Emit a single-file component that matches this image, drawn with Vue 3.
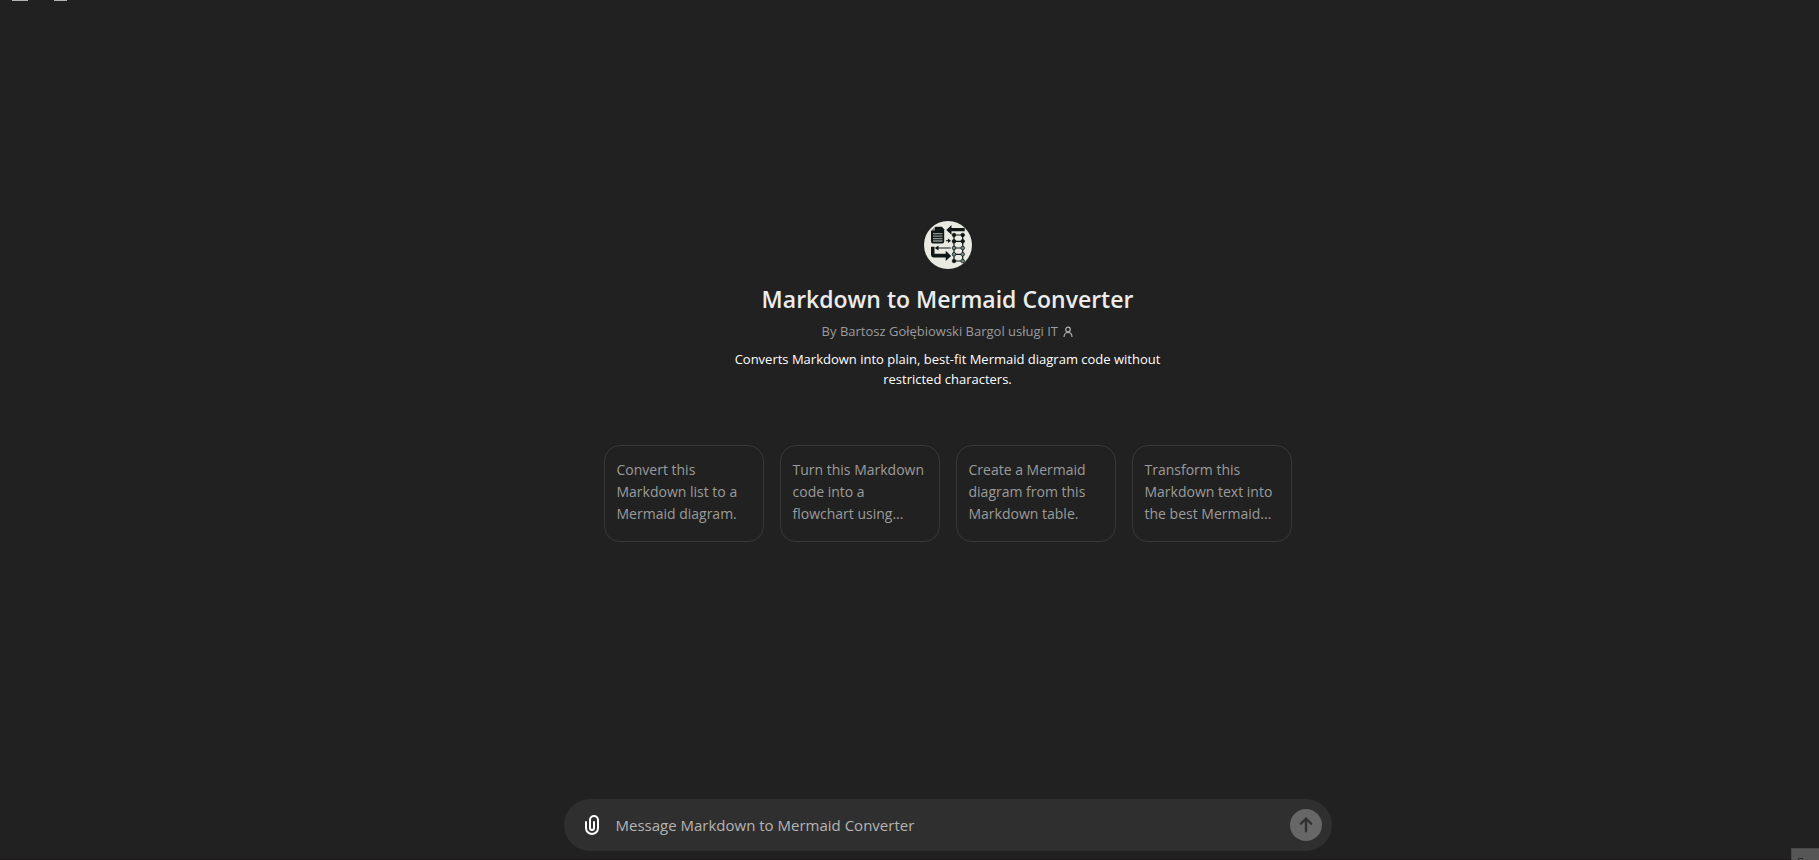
<script setup>
import { ref } from 'vue'

const message = ref('')
const prompts = [
  'Convert this Markdown list to a Mermaid diagram.',
  'Turn this Markdown code into a flowchart using...',
  'Create a Mermaid diagram from this Markdown table.',
  'Transform this Markdown text into the best Mermaid...',
]
const rows = [14, 20.3, 27, 33.3, 40]
</script>

<template>
  <div class="page">
    <div class="top-icons" aria-hidden="true"><span class="mark wide"></span><span class="mark"></span></div>

    <main class="content">
      <section class="intro">
        <svg class="logo" viewBox="0 0 48 48" aria-hidden="true">
          <circle cx="24" cy="24" r="24" fill="#e9ebe3" />
          <path d="M11.500 5.700H18l2.200 2.500v12.300a2 2 0 0 1-2 2H9a2 2 0 0 1-2-2V10z" fill="#101817" />
          <path d="M7.500 9.500L11 6v3.500z" fill="#8b918c" />
          <path d="M9 12.700h9.500M9 15.200h9.500M9 17.700h9.500M9 20h9.500" stroke="#8f958f" stroke-width="1.300" />
          <path d="M22.300 9L27.500 4v3h13.200v3.300H27.500v3.500z" fill="#101817" />
          <path d="M22 19.700h3M13 27h13.700" stroke="#101817" stroke-width="1" />
          <path d="M24 17.500l3 2.200-3 2.200zM14.500 24.500v5L10.700 27z" fill="#101817" />
          <path d="M7 25.700h3.500v7H21.700v-3L27.200 35l-5.500 5v-3.500H10a3 3 0 0 1-3-3z" fill="#101817" />
          <path d="M30 14v26M38.700 14v26M30 14h8.700M30 20.300h8.700M30 27h8.700M30 33.300h8.700M30 40h8.700" stroke="#101817" stroke-width="1.200" />
          <g v-for="(y, i) in rows" :key="y" stroke="#101817" stroke-width="0.800">
            <circle cx="30" :cy="y" r="1.800" :fill="i === 2 || i === 3 ? '#75908f' : '#101817'" />
            <circle cx="38.700" :cy="y" r="1.800" :fill="i < 2 ? '#101817' : '#75908f'" />
          </g>
        </svg>
        <h1>Markdown to Mermaid Converter</h1>
        <p class="author">
          By Bartosz Gołębiowski Bargol usługi IT
          <svg class="person" viewBox="0 0 10 12" aria-hidden="true">
            <circle cx="5" cy="3.500" r="2.300" />
            <path d="M1 11c0-2.600 1.700-4.500 4-4.500s4 1.900 4 4.500" />
          </svg>
        </p>
        <p class="description">Converts Markdown into plain, best-fit Mermaid diagram code without restricted characters.</p>
      </section>

      <section class="prompts" aria-label="Suggested prompts">
        <button v-for="prompt in prompts" :key="prompt" type="button" class="card" @click="message = prompt">
          {{ prompt }}
        </button>
      </section>
    </main>

    <form class="composer" @submit.prevent>
      <button type="button" class="attach" aria-label="Attach files">
        <svg viewBox="0 0 24 24" aria-hidden="true">
          <path fill-rule="evenodd" clip-rule="evenodd" d="M9 7a5 5 0 0 1 10 0v8a7 7 0 1 1-14 0V9a1 1 0 0 1 2 0v6a5 5 0 0 0 10 0V7a3 3 0 1 0-6 0v8a1 1 0 1 0 2 0V9a1 1 0 1 1 2 0v6a3 3 0 1 1-6 0z" />
        </svg>
      </button>
      <input v-model="message" type="text" aria-label="Message" placeholder="Message Markdown to Mermaid Converter" />
      <button type="submit" class="send" aria-label="Send message">
        <svg viewBox="0 0 32 32" aria-hidden="true">
          <path d="M16 22.300V9.500M10.800 14.700L16 9.500l5.200 5.200" />
        </svg>
      </button>
    </form>

    <div class="corner" aria-hidden="true"><span></span></div>
  </div>
</template>

<style>
body {
  background: #212121;
}
</style>

<style scoped>
.page {
  box-sizing: border-box;
  min-height: 100vh;
  display: flex;
  flex-direction: column;
  align-items: center;
  padding: 0 0 8px 76px;
  position: relative;
  background: #212121;
  color: #ececec;
  font-family: "Segoe UI", "Open Sans", "Noto Sans", sans-serif;
  border-bottom: 1px solid #1b191a;
}
.top-icons {
  position: absolute;
  top: 0;
  left: 12px;
  display: flex;
  gap: 26px;
}
.mark {
  width: 13px;
  height: 1px;
  background: #b4b4b4;
}
.wide {
  width: 16px;
}
.content {
  flex: 1;
  width: 100%;
  max-width: 688px;
  display: flex;
  flex-direction: column;
  align-items: center;
  justify-content: center;
  box-sizing: border-box;
  padding-bottom: 37px;
}
.intro {
  width: 100%;
  max-width: 448px;
  display: flex;
  flex-direction: column;
  align-items: center;
  text-align: center;
}
.logo {
  width: 48px;
  height: 48px;
  margin-bottom: 12px;
}
h1 {
  margin: 0;
  font-size: 23px;
  line-height: 36px;
  font-weight: 600;
  white-space: nowrap;
}
.author {
  margin: 4px 0 8px;
  font-size: 13px;
  line-height: 20px;
  color: #9b9b9b;
}
.person {
  width: 10px;
  height: 12px;
  margin-left: 2px;
  vertical-align: -2px;
  fill: none;
  stroke: #b4b4b4;
  stroke-width: 1.2;
}
.description {
  margin: 0;
  font-size: 13px;
  line-height: 20px;
  color: #fff;
}
.prompts {
  width: 100%;
  display: grid;
  grid-template-columns: repeat(4, 1fr);
  gap: 16px;
  margin-top: 56px;
}
.card {
  box-sizing: border-box;
  display: flex;
  padding: 13px 12px 16px;
  border: 1px solid #383838;
  border-radius: 16px;
  background: transparent;
  color: #9b9b9b;
  font: inherit;
  font-size: 14px;
  line-height: 22px;
  text-align: left;
}
.composer {
  box-sizing: border-box;
  width: 100%;
  max-width: 768px;
  height: 52px;
  display: flex;
  align-items: center;
  padding: 0 10px 0 16px;
  border-radius: 26px;
  background: #2f2f2f;
}
button {
  cursor: pointer;
}
.attach {
  width: 24px;
  height: 24px;
  padding: 0;
  border: 0;
  background: transparent;
}
.attach svg {
  display: block;
  width: 24px;
  height: 24px;
  fill: #fff;
}
input {
  flex: 1;
  min-width: 0;
  margin: 0 12px;
  padding: 0;
  border: 0;
  outline: 0;
  background: transparent;
  color: #ececec;
  font: inherit;
  font-size: 15px;
  line-height: 24px;
}
input::placeholder {
  color: #b4b4b4;
  opacity: 1;
}
.send {
  width: 32px;
  height: 32px;
  padding: 0;
  border: 0;
  border-radius: 50%;
  background: #676767;
}
.send svg {
  display: block;
  width: 32px;
  height: 32px;
  fill: none;
  stroke: #2f2f2f;
  stroke-width: 2.3;
  stroke-linecap: round;
  stroke-linejoin: round;
}
.corner {
  box-sizing: border-box;
  position: absolute;
  right: 0;
  bottom: -1px;
  width: 28px;
  height: 12px;
  padding: 9px 0 0 6px;
  overflow: hidden;
  border-top: 1px solid #484848;
  border-left: 1px solid #484848;
  background: #565656;
}
.corner span {
  box-sizing: border-box;
  display: block;
  width: 5px;
  height: 5px;
  border: 1px solid #2d2d2d;
}
</style>
